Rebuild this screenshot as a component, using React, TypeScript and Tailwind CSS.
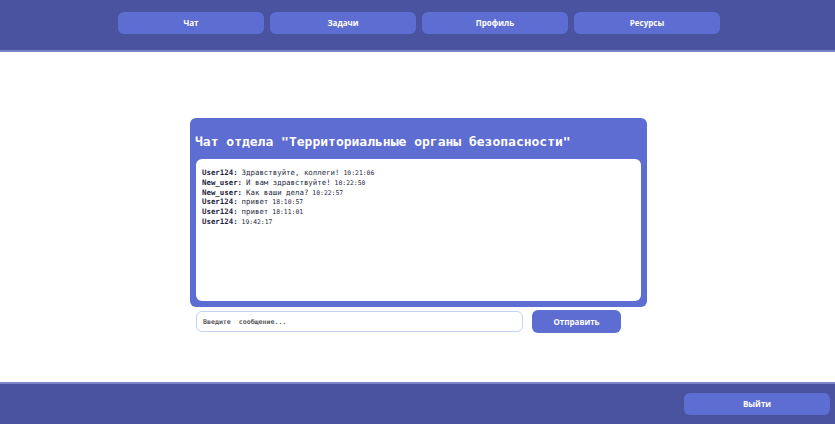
const navItems = ['Чат', 'Задачи', 'Профиль', 'Ресурсы'];

const messages = [
  { user: 'User124', text: 'Здравствуйте, коллеги!', time: '10:21:06' },
  { user: 'New_user', text: 'И вам здравствуйте!', time: '10:22:50' },
  { user: 'New_user', text: 'Как ваши дела?', time: '10:22:57' },
  { user: 'User124', text: 'привет', time: '18:10:57' },
  { user: 'User124', text: 'привет', time: '18:11:01' },
  { user: 'User124', text: '', time: '19:42:17' },
];

const App = () => {
  return (
    <div className="w-[835px] h-[424px] flex flex-col bg-white font-['Open_Sans',sans-serif]">
      <header className="h-[52px] bg-[#4a53a0] border-b-2 border-[#7c84c8] flex gap-[6px] pl-[118px] pt-[12px]">
        {navItems.map((item) => (
          <button
            key={item}
            className="w-[146px] h-[22px] rounded-[6px] bg-[#5e6dd2] text-white text-[8px] font-bold"
          >
            {item}
          </button>
        ))}
      </header>

      <main className="flex-1 flex flex-col items-center pt-[66px] pl-[2px]">
        <div className="w-[457px] h-[189px] bg-[#5e6dd2] rounded-[6px] px-[6px] pb-[6px] flex flex-col">
          <h1 className="font-['DejaVu_Sans_Mono',monospace] font-bold text-white text-[13px] leading-[13px] pt-[17px] pb-[11px] -ml-[1px]">
            Чат отдела "Территориальные органы безопасности"
          </h1>
          <div className="flex-1 bg-white rounded-[6px] px-[6px] pt-[9px] font-['DejaVu_Sans_Mono',monospace] text-[7.4px] text-[#262a40]">
            {messages.map((m, i) => (
              <div key={i} className="flex items-baseline gap-[4px] h-[9.8px] leading-[9.8px] whitespace-pre">
                <span className="font-bold text-[#1c2540]">{m.user}:</span>
                {m.text && <span>{m.text}</span>}
                <span className="text-[6.4px]">{m.time}</span>
              </div>
            ))}
          </div>
        </div>
        <div className="w-[457px] flex items-center gap-[9px] pl-[6px] mt-[3px]">
          <input
            placeholder="Введите  сообщение..."
            className="w-[327px] h-[21px] rounded-[6px] border-[1.5px] border-[#c3d3ee] px-[6px] font-['DejaVu_Sans_Mono',monospace] font-bold text-[6.6px] placeholder:text-[#5c5c5c]"
          />
          <button className="w-[89px] h-[23px] rounded-[6px] bg-[#5e6dd2] text-white text-[8px] font-bold">
            Отправить
          </button>
        </div>
      </main>

      <footer className="h-[42px] bg-[#4a53a0] border-t-2 border-[#7c84c8] flex justify-end items-start pt-[9px] pr-[5px]">
        <button className="w-[146px] h-[22px] rounded-[6px] bg-[#5e6dd2] text-white text-[8px] font-bold">
          Выйти
        </button>
      </footer>
    </div>
  );
};

export default App;
